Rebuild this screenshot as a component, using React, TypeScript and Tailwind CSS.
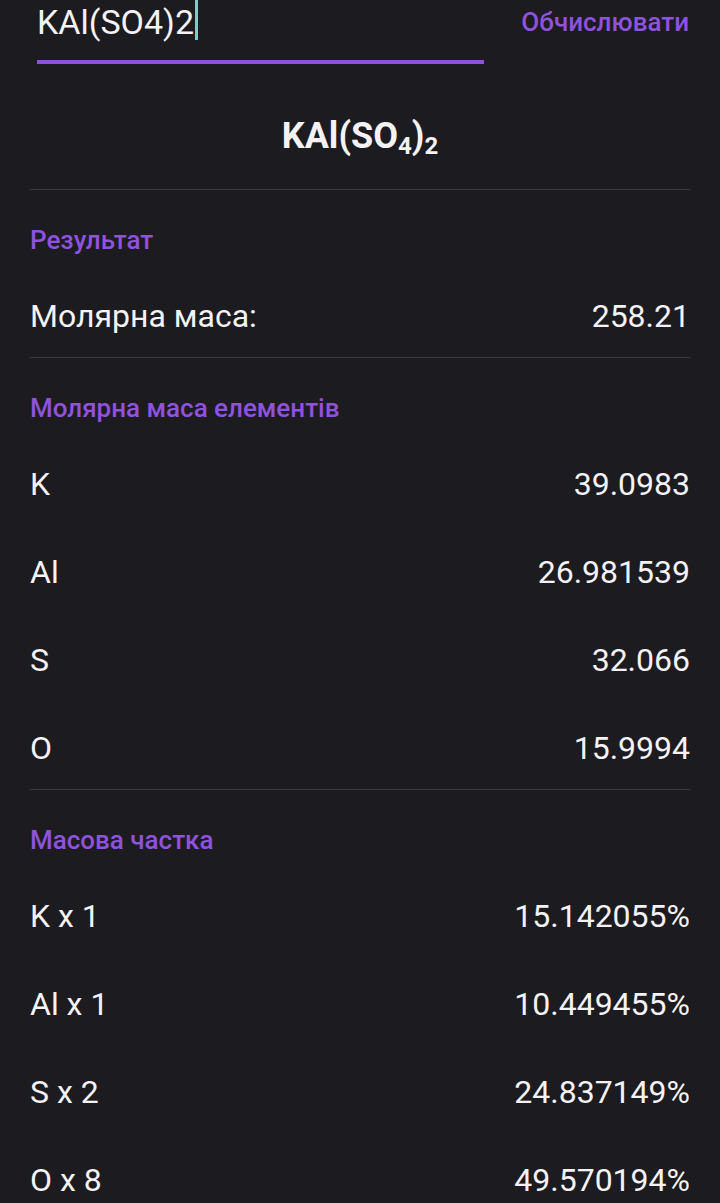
export default function App() {
  const elements = [
    { name: "K", value: "39.0983" },
    { name: "Al", value: "26.981539" },
    { name: "S", value: "32.066" },
    { name: "O", value: "15.9994" },
  ];
  const fractions = [
    { name: "K x 1", value: "15.142055%" },
    { name: "Al x 1", value: "10.449455%" },
    { name: "S x 2", value: "24.837149%" },
    { name: "O x 8", value: "49.570194%" },
  ];

  return (
    <div className="min-h-[1203px] overflow-hidden bg-[#1c1b1f] font-['Roboto','Noto_Sans',sans-serif] text-[#f4f2f5]">
      {/* Input */}
      <div className="flex items-start justify-between pl-[37px] pr-[31px]">
        <div className="w-[447px]">
          <div className="flex h-[44px] items-center text-[34px] leading-[44px]">
            <span>KAl(SO4)2</span>
            <span className="ml-[1px] h-[40px] w-[3px] self-start bg-[#79cfc4]" />
          </div>
          <div className="mt-[16px] h-1 bg-[#8f52de]" />
        </div>
        <button className="h-[44px] text-[26px] font-medium leading-[44px] text-[#8f52de]">
          Обчислювати
        </button>
      </div>

      {/* Formula */}
      <div className="flex h-[125px] items-center justify-center pt-[18px] text-[36px] font-bold">
        <span>
          KAl(SO<sub className="text-[24px]">4</sub>)<sub className="text-[24px]">2</sub>
        </span>
      </div>

      <div className="px-[30px]">
        <div className="h-px bg-[#3a393d]" />
        <Header>Результат</Header>
        <Row name="Молярна маса:" value="258.21" />

        <div className="-mt-[3px] h-px bg-[#3a393d]" />
        <Header>Молярна маса елементів</Header>
        {elements.map((e) => (
          <Row key={e.name} name={e.name} value={e.value} />
        ))}

        <div className="-mt-[3px] h-px bg-[#3a393d]" />
        <Header>Масова частка</Header>
        {fractions.map((e) => (
          <Row key={e.name} name={e.name} value={e.value} />
        ))}
      </div>
    </div>
  );
}

function Header({ children }: { children: React.ReactNode }) {
  return (
    <div className="h-[82px] pt-[36px] text-[26px] font-medium leading-[28px] text-[#8f52de]">
      {children}
    </div>
  );
}

function Row({ name, value }: { name: string; value: string }) {
  return (
    <div className="flex h-[88px] items-center justify-between text-[32px]">
      <span>{name}</span>
      <span>{value}</span>
    </div>
  );
}
